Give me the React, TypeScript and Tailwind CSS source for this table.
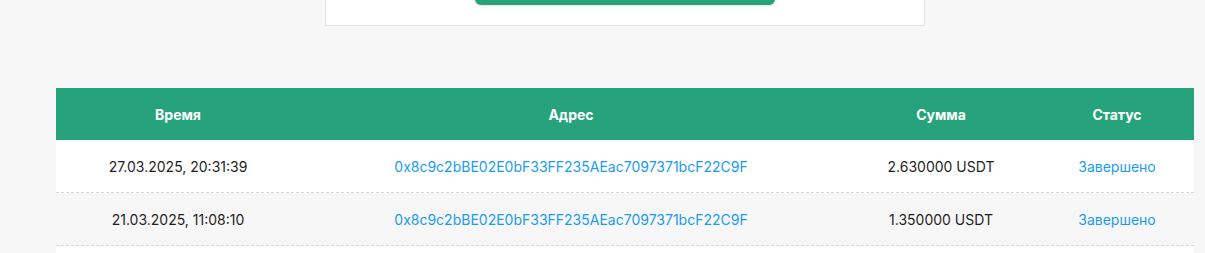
import React from 'react';

const rows = [
  { time: '27.03.2025, 20:31:39', address: '0x8c9c2bBE02E0bF33FF235AEac7097371bcF22C9F', amount: '2.630000 USDT', status: 'Завершено' },
  { time: '21.03.2025, 11:08:10', address: '0x8c9c2bBE02E0bF33FF235AEac7097371bcF22C9F', amount: '1.350000 USDT', status: 'Завершено' },
];

// column widths, left to right
const cols = ['w-[244px]', 'w-[542px]', 'w-[198px]', 'w-[154px]'];

export default function App() {
  return (
    <div className="min-h-screen bg-[#f7f7f7] font-['Inter','Liberation_Sans',sans-serif] overflow-hidden">
      <div className="ml-[325px] mt-[-56px] w-[600px] bg-white border border-[#e3e3e8] flex justify-center pt-[16px] pb-[20px]">
        <button className="h-[44px] w-[300px] rounded-[6px] bg-[#27a37c] shadow-sm" />
      </div>

      <div className="ml-[56px] mt-[62px] w-[1138px]">
        <div className="flex h-[52px] bg-[#27a37c] text-white text-[14px] font-bold">
          {['Время', 'Адрес', 'Сумма', 'Статус'].map((h, i) => (
            <div key={h} className={`${cols[i]} flex items-center justify-center`}>{h}</div>
          ))}
        </div>
        {rows.map((r, i) => (
          <div
            key={i}
            className={`flex h-[53px] border-b border-dashed border-[#d6d6de] text-[14px] ${i % 2 === 1 ? 'bg-[#f7f7f7]' : 'bg-white'}`}
          >
            <div className={`${cols[0]} flex items-center justify-center text-[#1f1f1f]`}>{r.time}</div>
            <div className={`${cols[1]} flex items-center justify-center text-[#1a9cf2]`}>{r.address}</div>
            <div className={`${cols[2]} flex items-center justify-center text-[#1f1f1f]`}>{r.amount}</div>
            <div className={`${cols[3]} flex items-center justify-center text-[#1a9cf2]`}>{r.status}</div>
          </div>
        ))}
        <div className="h-[40px] bg-white" />
      </div>
    </div>
  );
}
